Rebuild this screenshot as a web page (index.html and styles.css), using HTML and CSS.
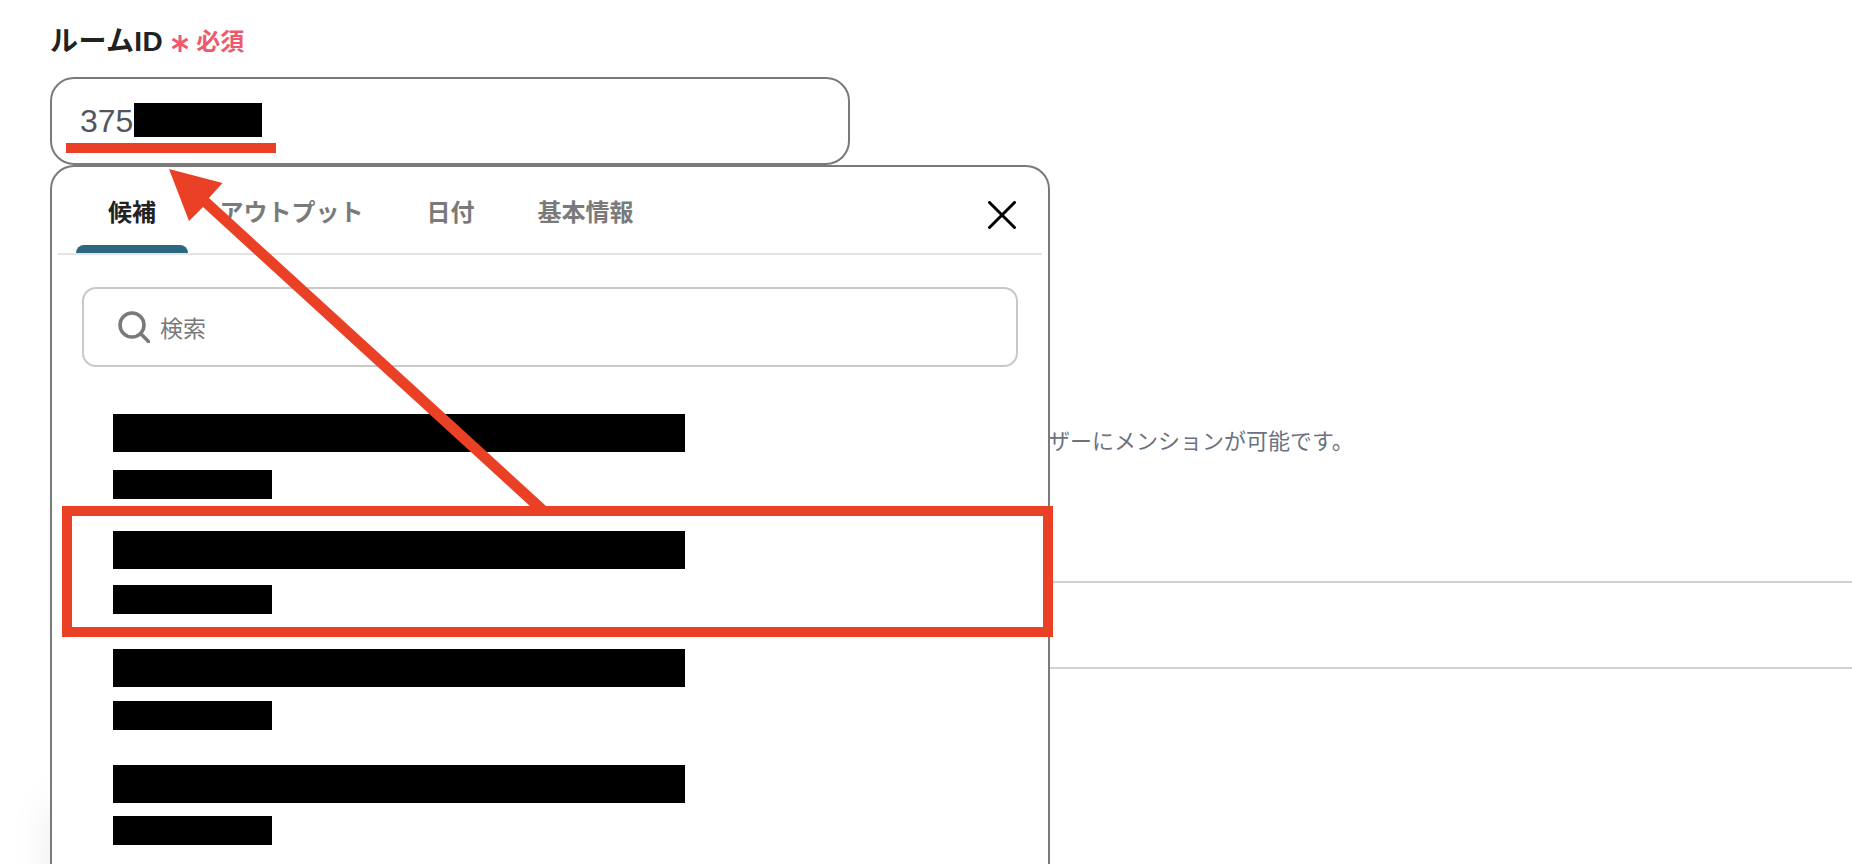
FILE: index.html
```html
<!DOCTYPE html>
<html lang="ja">

    <head>
        <meta charset="utf-8">
        <title>ルームID</title>
        <link rel="stylesheet" href="styles.css">
    </head>

    <body>
        <div class="page">
            <div class="field-label">
                <span class="label-text">ルームID</span>
                <svg class="required-mark" viewBox="0 0 16 17" width="16" height="17">
                    <path d="M8 0V17M0.5 4L15.5 13M15.5 4L0.5 13" />
                </svg>
                <span class="required-text">必須</span>
            </div>

            <div class="field-input">
                <span class="value-text">375</span>
                <span class="redact-value"></span>
            </div>

            <p class="field-hint">ザーにメンションが可能です。</p>
            <div class="field-line first"></div>
            <div class="field-line second"></div>
        </div>

        <!-- suggestion popup over the form -->
        <div class="popup">
            <div class="tab-bar">
                <div class="tab active"><span>候補</span></div>
                <div class="tab"><span>アウトプット</span></div>
                <div class="tab"><span>日付</span></div>
                <div class="tab"><span>基本情報</span></div>
                <svg class="close-btn" viewBox="0 0 28 28" width="28" height="28">
                    <path d="M1.5 1.5L26.5 26.5M26.5 1.5L1.5 26.5" />
                </svg>
            </div>

            <div class="search-box">
                <svg class="search-icon" viewBox="0 0 32 32" width="32" height="32">
                    <circle cx="14" cy="14" r="12" />
                    <path d="M23 23L30.5 30.5" />
                </svg>
                <span>検索</span>
            </div>

            <div class="suggest-list">
                <div class="suggest-row"><div class="redact-title"></div><div class="redact-sub"></div></div>
                <div class="suggest-row"><div class="redact-title"></div><div class="redact-sub"></div></div>
                <div class="suggest-row"><div class="redact-title"></div><div class="redact-sub"></div></div>
                <div class="suggest-row"><div class="redact-title"></div><div class="redact-sub"></div></div>
            </div>
        </div>

        <!-- red annotations drawn on top of the screenshot -->
        <div class="mark-underline"></div>
        <div class="mark-box"></div>
        <svg class="mark-arrow" viewBox="0 0 1852 864" width="1852" height="864">
            <polygon points="169,169 222.5,183 209,198 546,506 530,506 203,207 189,221" />
        </svg>
    </body>

</html>
```

FILE: styles.css
```css
* {
    box-sizing: border-box;
    font-family: "Liberation Sans", "Noto Sans CJK JP", sans-serif;
}

body {
    position: relative;
    width: 1852px;
    height: 864px;
    margin: 0;
    overflow: hidden;
    background-color: white;
}

.page {
    display: flex;
    flex-direction: column;
    padding-top: 22px;
    padding-left: 50px;
}

.field-label {
    display: flex;
    align-items: center;
    height: 34px;
}

.label-text {
    font-size: 28px;
    font-weight: 700;
    letter-spacing: 0.4px;
    color: #222;
}

.required-mark {
    margin-left: 9px;
    margin-top: 9px;
}

.required-mark path {
    fill: none;
    stroke: #ee5a6c;
    stroke-width: 3;
}

.required-text {
    margin-left: 8px;
    font-size: 24px;
    font-weight: 700;
    color: #ee5a6c;
}

.field-input {
    display: flex;
    align-items: center;
    width: 800px;
    height: 88px;
    margin-top: 21px;
    padding-left: 28px;
    padding-bottom: 2px;
    font-size: 32px;
    color: #50555f;
    background-color: white;
    border: 2px solid #7a7a7a;
    border-radius: 24px;
}

.value-text {
    margin-top: 2px;
}

.redact-value {
    width: 128px;
    height: 34px;
    margin-left: 1px;
    background-color: black;
}

.field-hint {
    margin: 261px 0 0 998px;
    font-size: 22px;
    line-height: 32px;
    white-space: nowrap;
    color: #6b7280;
}

.field-line {
    height: 2px;
    background-color: #cdd2d6;
}

.field-line.first {
    margin-top: 123px;
}

.field-line.second {
    margin-top: 84px;
}

.popup {
    position: absolute;
    left: 50px;
    top: 165px;
    width: 1000px;
    height: 699px;
    background-color: white;
    border: 2px solid #7a7a7a;
    border-bottom: none;
    border-radius: 24px 24px 0 0;
    box-shadow: -40px 600px 40px -40px rgba(0, 0, 0, 0.08);
}

.tab-bar {
    display: flex;
    align-items: flex-end;
    height: 88px;
    margin: 0 6px;
    padding-left: 18px;
    padding-right: 26px;
    border-bottom: 2px solid #e4e4e4;
}

.tab {
    display: flex;
    flex-direction: column;
    align-items: center;
    height: 86px;
    padding: 32px 31.5px 0;
    font-size: 24px;
    font-weight: 700;
    line-height: 28px;
    color: #7a7a7a;
    position: relative;
}

.tab.active {
    width: 112px;
    padding-left: 0;
    padding-right: 0;
    color: #222;
}

.tab.active::after {
    content: "";
    position: absolute;
    left: 0;
    right: 0;
    bottom: 0;
    height: 8px;
    background-color: #2d6680;
    border-radius: 8px 8px 0 0;
}

.close-btn {
    margin-left: auto;
    margin-bottom: 24px;
}

.close-btn path {
    fill: none;
    stroke: black;
    stroke-width: 3;
    stroke-linecap: round;
}

.search-box {
    display: flex;
    align-items: center;
    gap: 10px;
    height: 80px;
    margin: 32px 30px 0 30px;
    padding-left: 34px;
    font-size: 23px;
    color: #7a7a7a;
    border: 2px solid #c8c8c8;
    border-radius: 14px;
}

.search-icon circle,
.search-icon path {
    fill: none;
    stroke: #7a7a7a;
    stroke-width: 3.5;
    stroke-linecap: round;
}

.suggest-list {
    display: flex;
    flex-direction: column;
    margin-top: 47px;
    padding-left: 61px;
}

.suggest-row {
    margin-bottom: 35px;
}

.suggest-row:nth-child(1) {
    margin-bottom: 32px;
}

.redact-title {
    width: 572px;
    height: 38px;
    background-color: black;
}

.redact-sub {
    width: 159px;
    height: 29px;
    margin-top: 16px;
    background-color: black;
}

.suggest-row:nth-child(1) .redact-sub {
    margin-top: 18px;
}

.suggest-row:nth-child(3) .redact-sub {
    margin-top: 14px;
}

.suggest-row:nth-child(4) .redact-sub {
    margin-top: 13px;
}

.mark-underline {
    position: absolute;
    left: 66px;
    top: 143px;
    width: 210px;
    height: 10px;
    background-color: #ea4025;
}

.mark-box {
    position: absolute;
    left: 62px;
    top: 506px;
    width: 991px;
    height: 131px;
    border: 10px solid #ea4025;
}

.mark-arrow {
    position: absolute;
    left: 0;
    top: 0;
}

.mark-arrow polygon {
    fill: #ea4025;
}
```
